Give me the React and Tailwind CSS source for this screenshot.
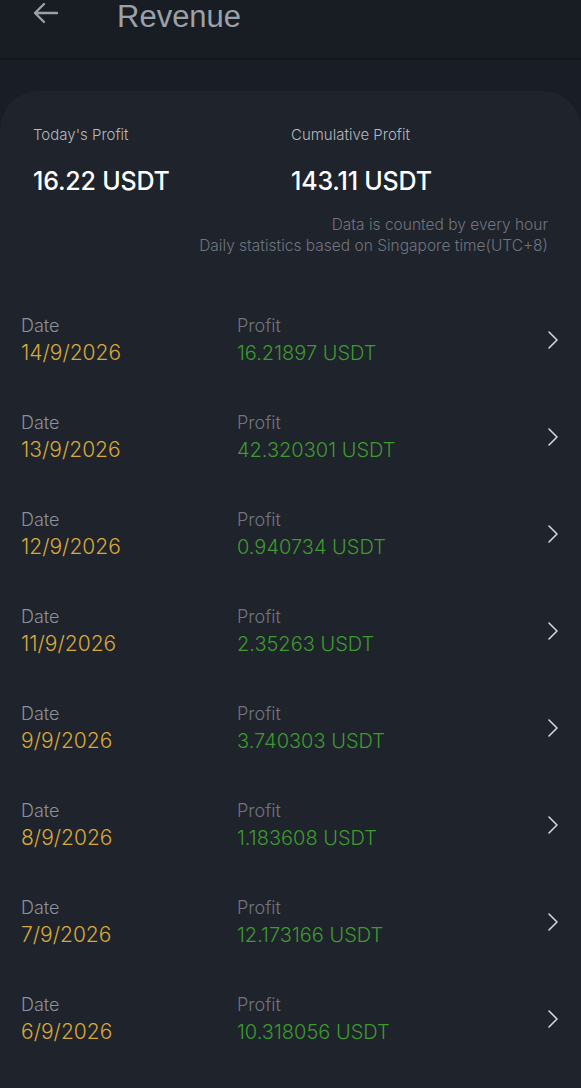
import React from "react";

const rows = [
  ["14/9/2026", "16.21897 USDT"],
  ["13/9/2026", "42.320301 USDT"],
  ["12/9/2026", "0.940734 USDT"],
  ["11/9/2026", "2.35263 USDT"],
  ["9/9/2026", "3.740303 USDT"],
  ["8/9/2026", "1.183608 USDT"],
  ["7/9/2026", "12.173166 USDT"],
  ["6/9/2026", "10.318056 USDT"],
];

function Chevron() {
  return (
    <svg width="12" height="20" viewBox="0 0 12 20" fill="none">
      <polyline points="2,2 10,10 2,18" stroke="#d4d7dc" strokeWidth="1.6" strokeLinecap="round" strokeLinejoin="round" />
    </svg>
  );
}

export default function App() {
  return (
    <div className="min-h-[1088px] bg-[#191d25] font-['Inter',sans-serif] overflow-hidden">
      <div className="h-[60px] bg-[#181c23] border-b-2 border-[#14171d] flex items-start">
        <div className="flex items-center h-[34px] pl-[33px]">
          <svg width="26" height="22" viewBox="0 0 26 22" fill="none" className="mt-[-8px]">
            <path d="M24 11H3M11 2L2 11l9 9" stroke="#9aa0a8" strokeWidth="2.4" strokeLinecap="round" strokeLinejoin="round" />
          </svg>
          <h1 className="ml-[58px] text-[31px] leading-[34px] text-[#9ba1a9] font-['Liberation_Sans',sans-serif]">Revenue</h1>
        </div>
      </div>

      <div className="mt-[31px] bg-[#1f232c] rounded-t-[38px] pt-[34px] pb-6">
        <div className="grid grid-cols-[258px_1fr] px-[33px]">
          <div>
            <p className="text-[15px] leading-[20px] text-[#b4b8bf] font-light">Today's Profit</p>
            <p className="mt-[21px] text-[25px] leading-[30px] text-white font-medium tracking-[-0.2px]">16.22 USDT</p>
          </div>
          <div>
            <p className="text-[15px] leading-[20px] text-[#b4b8bf] font-light">Cumulative Profit</p>
            <p className="mt-[21px] text-[25px] leading-[30px] text-white font-medium tracking-[-0.2px]">143.11 USDT</p>
          </div>
        </div>
        <div className="mt-[18px] pr-[33px] text-right text-[15.5px] leading-[21px] text-[#6f747d] font-light">
          <p>Data is counted by every hour</p>
          <p>Daily statistics based on Singapore time(UTC+8)</p>
        </div>

        <div className="mt-[35px]">
          {rows.map(([d, p]) => (
            <div key={d} className="h-[97px] flex items-center pl-[21px] pr-[22px]">
              <div className="w-[216px]">
                <p className="text-[18px] leading-[26px] text-[#8b919a] font-light">Date</p>
                <p className="text-[21px] leading-[28px] text-[#d8a93a] font-light">{d}</p>
              </div>
              <div className="flex-1">
                <p className="text-[18px] leading-[26px] text-[#70757e] font-light">Profit</p>
                <p className="text-[20px] leading-[28px] text-[#3d9a2e] font-light">{p}</p>
              </div>
              <Chevron />
            </div>
          ))}
        </div>
      </div>
    </div>
  );
}
